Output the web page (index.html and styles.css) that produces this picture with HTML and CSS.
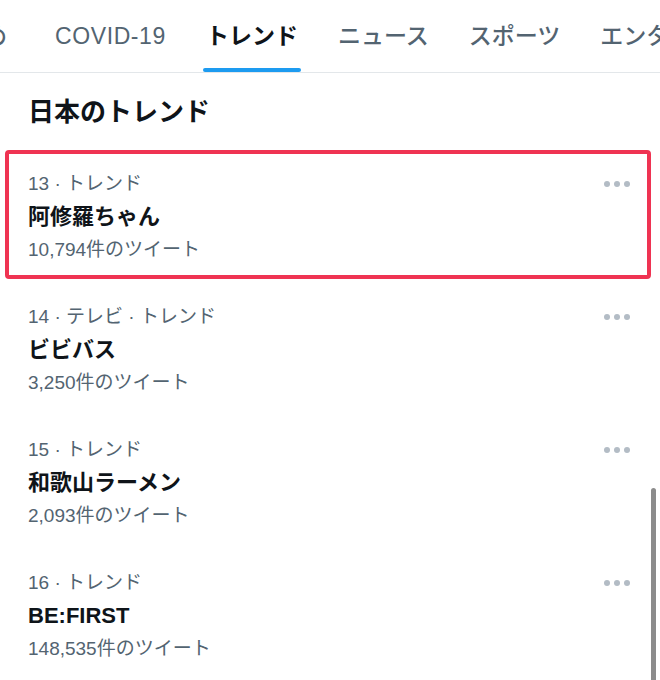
FILE: index.html
```html
<!DOCTYPE html>
<html lang="ja">
<head>
    <meta charset="UTF-8">
    <meta name="viewport" content="width=device-width, initial-scale=1.0">
    <title>トレンド</title>
    <link rel="stylesheet" href="styles.css">
</head>
<body>
    <main class="page">
        <nav class="tabs">
            <div class="tab">おすすめ</div>
            <div class="tab tab-latin">COVID-19</div>
            <div class="tab active">トレンド</div>
            <div class="tab">ニュース</div>
            <div class="tab">スポーツ</div>
            <div class="tab">エンターテイメント</div>
        </nav>

        <h1 class="section-title">日本のトレンド</h1>

        <div class="trend selected">
            <div class="trend-body">
                <div class="trend-meta">13 · トレンド</div>
                <div class="trend-name">阿修羅ちゃん</div>
                <div class="trend-count">10,794件のツイート</div>
            </div>
            <div class="more"><span></span><span></span><span></span></div>
        </div>

        <div class="trend">
            <div class="trend-body">
                <div class="trend-meta">14 · テレビ · トレンド</div>
                <div class="trend-name">ビビバス</div>
                <div class="trend-count">3,250件のツイート</div>
            </div>
            <div class="more"><span></span><span></span><span></span></div>
        </div>

        <div class="trend">
            <div class="trend-body">
                <div class="trend-meta">15 · トレンド</div>
                <div class="trend-name">和歌山ラーメン</div>
                <div class="trend-count">2,093件のツイート</div>
            </div>
            <div class="more"><span></span><span></span><span></span></div>
        </div>

        <div class="trend">
            <div class="trend-body">
                <div class="trend-meta">16 · トレンド</div>
                <div class="trend-name">BE:FIRST</div>
                <div class="trend-count">148,535件のツイート</div>
            </div>
            <div class="more"><span></span><span></span><span></span></div>
        </div>

        <div class="scrollbar"></div>
    </main>
</body>
</html>
```

FILE: styles.css
```css
body {
    margin: 0;
    padding: 0;
    background: #fff;
    font-family: "Liberation Sans", "Noto Sans CJK JP", sans-serif;
    color: #0f1419;
    overflow: hidden;
}
.page {
    position: relative;
    width: 660px;
    height: 680px;
    overflow: hidden;
}
.tabs {
    display: flex;
    gap: 40px;
    height: 72px;
    border-bottom: 1px solid #e3e7ea;
    margin-left: -85px;
    white-space: nowrap;
}
.tab {
    position: relative;
    flex: none;
    font-size: 23px;
    line-height: 72px;
    font-weight: 500;
    color: #536471;
}
.tab:first-child {
    margin-right: 8px;
}
.tab-latin {
    letter-spacing: 0.6px;
}
.tab.active {
    color: #0f1419;
    font-weight: 700;
}
.tab.active::after {
    content: "";
    position: absolute;
    left: -3px;
    right: -3px;
    bottom: 0;
    height: 4px;
    border-radius: 2px;
    background: #1d9bf0;
}
.section-title {
    margin: 0;
    padding: 22px 28px 21px;
    font-size: 26px;
    line-height: 34px;
    font-weight: 700;
}
.trend {
    position: relative;
    display: flex;
    justify-content: space-between;
    padding: 17px 30px 17px 28px;
}
.trend.selected::after {
    content: "";
    position: absolute;
    top: 0;
    left: 5px;
    right: 9px;
    bottom: 4px;
    border: 4px solid #ef3352;
    border-radius: 4px;
}
.trend-meta, .trend-count {
    font-size: 19px;
    line-height: 33px;
    color: #536471;
}
.trend-name {
    font-size: 22px;
    line-height: 33px;
    font-weight: 700;
}
.more {
    display: flex;
    gap: 4px;
    height: 33px;
    align-items: center;
}
.more span {
    width: 6px;
    height: 6px;
    border-radius: 50%;
    background: #b3bcc5;
}
.scrollbar {
    position: absolute;
    top: 488px;
    left: 651px;
    width: 5px;
    height: 200px;
    border-radius: 3px;
    background: #8c8c8c;
}
```
